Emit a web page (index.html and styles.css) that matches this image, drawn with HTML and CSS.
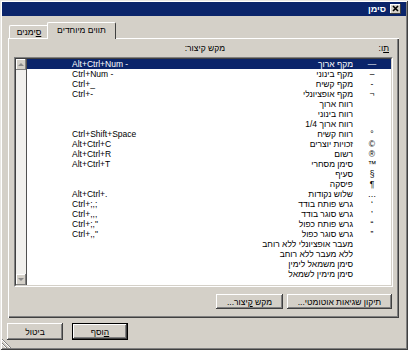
FILE: index.html
```html
<!DOCTYPE html>
<html lang="he" dir="rtl">
  <head>
    <meta charset="UTF-8" />
    <title>סימן</title>
    <link rel="stylesheet" href="styles.css">
  </head>
  <body>
    <div class="window">
      <div class="titlebar">
        <span class="close-btn">
          <svg width="11" height="10" viewBox="0 0 11 10">
            <path d="M3 2 L8 7 M8 2 L3 7" stroke="#000" stroke-width="1.6" fill="none" />
          </svg>
        </span>
        <span class="title">סימן</span>
      </div>

      <div class="tabs">
        <div class="tab"><u>ס</u>ימנים</div>
        <div class="tab active">תווים מיוחדים</div>
      </div>

      <div class="panel">
        <div class="labels">
          <span class="lbl-char"><u>ת</u>ו:</span>
          <span class="lbl-key">מקש קיצור:</span>
        </div>

        <div class="listbox">
          <div class="list-inner">
            <div class="rows">
              <div class="row selected"><span class="sym">—</span><span class="name">מקף ארוך</span><span class="key">Alt+Ctrl+Num -</span></div>
              <div class="row"><span class="sym">–</span><span class="name">מקף בינוני</span><span class="key">Ctrl+Num -</span></div>
              <div class="row"><span class="sym">-</span><span class="name">מקף קשיח</span><span class="key">Ctrl+_</span></div>
              <div class="row"><span class="sym">¬</span><span class="name">מקף אופציונלי</span><span class="key">Ctrl+-</span></div>
              <div class="row"><span class="sym"></span><span class="name">רווח ארוך</span><span class="key"></span></div>
              <div class="row"><span class="sym"></span><span class="name">רווח בינוני</span><span class="key"></span></div>
              <div class="row"><span class="sym"></span><span class="name">רווח ארוך 1/4</span><span class="key"></span></div>
              <div class="row"><span class="sym">°</span><span class="name">רווח קשיח</span><span class="key">Ctrl+Shift+Space</span></div>
              <div class="row"><span class="sym">©</span><span class="name">זכויות יוצרים</span><span class="key">Alt+Ctrl+C</span></div>
              <div class="row"><span class="sym">®</span><span class="name">רשום</span><span class="key">Alt+Ctrl+R</span></div>
              <div class="row"><span class="sym">™</span><span class="name">סימן מסחרי</span><span class="key">Alt+Ctrl+T</span></div>
              <div class="row"><span class="sym">§</span><span class="name">סעיף</span><span class="key"></span></div>
              <div class="row"><span class="sym">¶</span><span class="name">פיסקה</span><span class="key"></span></div>
              <div class="row"><span class="sym">…</span><span class="name">שלוש נקודות</span><span class="key">Alt+Ctrl+.</span></div>
              <div class="row"><span class="sym">‘</span><span class="name">גרש פותח בודד</span><span class="key">Ctrl+;,;</span></div>
              <div class="row"><span class="sym">’</span><span class="name">גרש סוגר בודד</span><span class="key">Ctrl+,,,</span></div>
              <div class="row"><span class="sym">“</span><span class="name">גרש פותח כפול</span><span class="key">Ctrl+;,"</span></div>
              <div class="row"><span class="sym">”</span><span class="name">גרש סוגר כפול</span><span class="key">Ctrl+,,"</span></div>
              <div class="row"><span class="sym"></span><span class="name">מעבר אופציונלי ללא רוחב</span><span class="key"></span></div>
              <div class="row"><span class="sym"></span><span class="name">ללא מעבר ללא רוחב</span><span class="key"></span></div>
              <div class="row"><span class="sym"></span><span class="name">סימן משמאל לימין</span><span class="key"></span></div>
              <div class="row"><span class="sym"></span><span class="name">סימן מימין לשמאל</span><span class="key"></span></div>
            </div>
            <div class="scrollbar">
              <div class="sb-btn up"></div>
              <div class="sb-track"></div>
              <div class="sb-btn down"></div>
            </div>
          </div>
        </div>

        <div class="panel-buttons">
          <button class="btn btn-autocorrect">תיקון שגיאות אוטומטי...</button>
          <button class="btn btn-shortcut">מקש <u>ק</u>יצור...</button>
        </div>
      </div>

      <div class="footer">
        <button class="btn default"><u>ה</u>וסף</button>
        <button class="btn">ביטול</button>
      </div>

      <svg class="grip" width="10" height="10" viewBox="0 0 10 10">
        <path d="M0 1 L9 10 M0 5 L5 10" stroke="#808080" stroke-width="1" fill="none" />
        <path d="M0 2 L8 10 M0 6 L4 10" stroke="#fff" stroke-width="1" fill="none" />
      </svg>
    </div>
  </body>
</html>
```

FILE: styles.css
```css
*,
*::before,
*::after {
  box-sizing: border-box;
}

html,
body {
  margin: 0;
  padding: 0;
  background: #d4d0c8;
  font-family: "Liberation Sans", Arial, sans-serif;
  font-size: 8.5px;
  color: #000;
}

.window {
  position: relative;
  width: 408px;
  height: 350px;
  padding: 2px;
  background: #d4d0c8;
  display: flex;
  flex-direction: column;
  box-shadow: inset 1px 1px #e8e6e2, inset -1px -1px #404040,
    inset 2px 2px #fff, inset -2px -2px #808080;
}

/* title bar */
.titlebar {
  height: 14px;
  background: #0a246a;
  display: flex;
  align-items: center;
  gap: 4px;
  padding-right: 5px;
}

.close-btn {
  width: 11px;
  height: 10px;
  background: #d4d0c8;
  box-shadow: inset -1px -1px #404040, inset 1px 1px #fff;
  display: flex;
}

.title {
  color: #fff;
  font-weight: bold;
  font-size: 9px;
}

/* tabs */
.tabs {
  height: 22px;
  direction: ltr;
  display: flex;
  align-items: flex-end;
  padding-left: 7px;
}

.tab {
  height: 13px;
  width: 40px;
  line-height: 12px;
  text-align: center;
  background: #d4d0c8;
  border-top: 1px solid #fff;
  border-left: 1px solid #fff;
  border-right: 1px solid #404040;
  border-radius: 2px 2px 0 0;
  direction: rtl;
}

.tab.active {
  position: relative;
  z-index: 1;
  width: 69px;
  height: 17px;
  line-height: 15px;
  margin-left: -2px;
  margin-bottom: -1px;
}

/* panel */
.panel {
  position: relative;
  height: 280px;
  margin: 0 7px 0 6px;
  padding: 5px 6px 0 6px;
  box-shadow: inset 1px 1px #fff, inset -1px -1px #404040,
    inset -2px -2px #808080;
}

.labels {
  display: flex;
  height: 10px;
  line-height: 10px;
  padding-right: 4px;
}

.lbl-char {
  width: 164px;
}

.listbox {
  margin-top: 4px;
  height: 230px;
  border: 1px solid;
  border-color: #808080 #fff #fff #808080;
}

.list-inner {
  height: 100%;
  display: flex;
  border: 1px solid;
  border-color: #404040 #d4d0c8 #d4d0c8 #404040;
  background: #fff;
}

.rows {
  flex: 1;
}

.row {
  display: flex;
  height: 10px;
  line-height: 10px;
  white-space: nowrap;
}

.row.selected {
  background: #0a246a;
  color: #fff;
}

.sym {
  width: 38px;
  text-align: center;
}

.name {
  flex: 1;
  text-align: right;
}

.key {
  width: 172px;
  direction: ltr;
  text-align: left;
  padding-left: 45px;
}

.scrollbar {
  width: 11px;
  display: flex;
  flex-direction: column;
  background: #f1f0ed;
  border-right: 1px solid #505050;
}

.sb-btn {
  height: 11px;
  background: #d4d0c8;
  box-shadow: inset -1px -1px #808080, inset 1px 1px #fff;
  display: flex;
  align-items: center;
  justify-content: center;
}

.sb-btn::after {
  content: "";
  width: 0;
  height: 0;
  border-left: 3px solid transparent;
  border-right: 3px solid transparent;
}

.sb-btn.up::after {
  border-bottom: 3px solid #8a8a8a;
}

.sb-btn.down::after {
  border-top: 3px solid #8a8a8a;
}

.sb-track {
  flex: 1;
}

/* buttons */
.btn {
  height: 15px;
  padding: 0;
  border: none;
  background: #d4d0c8;
  font: inherit;
  color: #000;
  box-shadow: inset -1px -1px #404040, inset 1px 1px #fff,
    inset -2px -2px #808080;
}

.panel-buttons {
  display: flex;
  gap: 4px;
  margin-top: 7px;
  padding-right: 1px;
}

.btn-autocorrect {
  width: 105px;
}

.btn-shortcut {
  width: 67px;
}

.footer {
  display: flex;
  justify-content: flex-end;
  gap: 9px;
  margin-top: 5px;
  padding-left: 5px;
}

.footer .btn {
  width: 56px;
  height: 17px;
}

.footer .btn.default {
  box-shadow: inset 0 0 0 1px #000, inset -2px -2px #404040,
    inset 2px 2px #fff, inset -3px -3px #808080;
}

.grip {
  position: absolute;
  left: 2px;
  bottom: 2px;
}
```
